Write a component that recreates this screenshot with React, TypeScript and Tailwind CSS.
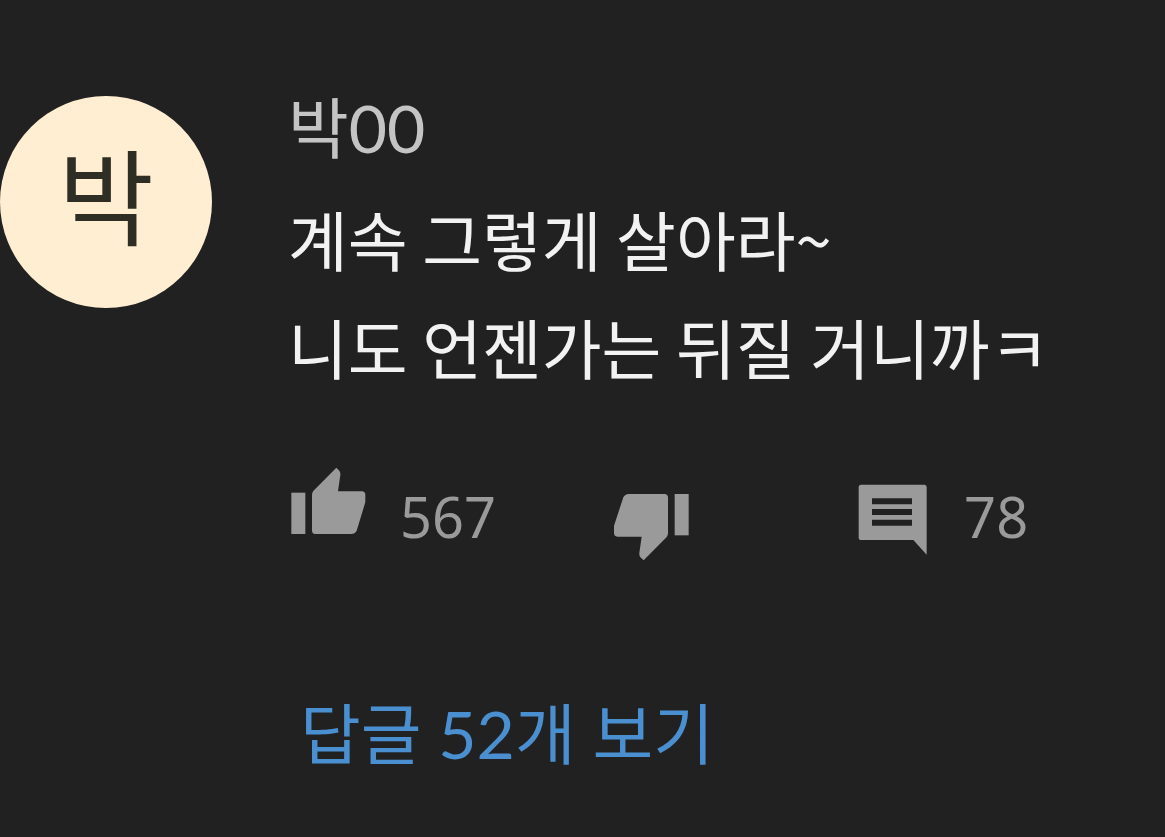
import React from 'react';

const ThumbUpIcon: React.FC<{ className?: string }> = ({ className }) => (
  <svg viewBox="0 0 24 24" fill="currentColor" className={className} aria-hidden="true">
    <path d="M1 8.6h4.2V21H1z" />
    <path d="M14.5 1.1 7.8 7.9c-.4.4-.6.9-.6 1.500V20c0 .6.4 1 1 1h10.800c.7 0 1.300-.4 1.600-1l2.500-8.200c.1-.2.1-.4.1-.7V9.200c0-.6-.4-1-1-1h-7.200l.7-4.900v-.4c0-.3-.1-.6-.3-.9z" />
  </svg>
);

const ThumbDownIcon: React.FC<{ className?: string }> = ({ className }) => (
  <svg viewBox="0 0 24 24" fill="currentColor" className={className} aria-hidden="true">
    <path d="M18.8 3H23v12.400h-4.200z" />
    <path d="M9.500 22.900l6.700-6.800c.4-.4.6-.9.6-1.500V4c0-.6-.4-1-1-1H5c-.7 0-1.300.4-1.600 1L.7 12.200c-.1.2-.1.4-.1.7v1.900c0 .6.4 1 1 1h7.300l-.7 4.900v.4c0 .3.1.6.3.9z" />
  </svg>
);

const CommentIcon: React.FC<{ className?: string }> = ({ className }) => (
  <svg viewBox="0 0 24 24" fill="currentColor" className={className} aria-hidden="true">
    <path
      fillRule="evenodd"
      d="M2.7 2h19c.4 0 .7.3.7.7V23l-4-4.400H2.700c-.4 0-.7-.3-.7-.7V2.700c0-.4.3-.7.7-.7zM6 6.100v1.800h12V6.100zm0 3.200v1.800h12V9.300zm0 3.200v1.800h12v-1.800z"
    />
  </svg>
);

const Comment: React.FC = () => {
  return (
    <article className="flex items-start gap-[76px] pt-[88px]">
      {/* Avatar */}
      <div className="mt-2 flex size-[212px] shrink-0 justify-center rounded-full bg-[#ffeed2] text-[104px] leading-[204px] text-[#2e2e24]">
        박
      </div>

      <div className="min-w-0 flex-1">
        <h2 className="text-[66px] leading-[80px] text-[#c4c4c4]">박00</h2>
        <p className="mt-4 font-['Noto_Sans_CJK_KR',sans-serif] text-[65px] leading-[108px] text-[#f2f2f2]">
          계속 그렇게 살아라~
          <br />
          니도 언젠가는 뒤질 거니까ㅋ
        </p>

        {/* Actions */}
        <div className="mt-16 flex items-center font-['Noto_Sans',sans-serif] text-[56px] leading-[80px] text-[#9a9a9a]">
          <button type="button" className="flex items-center gap-8">
            <ThumbUpIcon className="mb-6 size-20" />
            567
          </button>
          <button type="button" className="ml-[116px] pt-4" aria-label="Dislike">
            <ThumbDownIcon className="size-20" />
          </button>
          <button type="button" className="ml-40 flex items-center gap-8">
            <CommentIcon className="mt-1 size-20" />
            78
          </button>
        </div>

        <a href="#replies" className="mt-28 ml-3 block text-[66px] leading-[108px] text-[#4a8fcf]">
          답글 52개 보기
        </a>
      </div>
    </article>
  );
};

const App: React.FC = () => {
  return (
    <main className="min-h-screen bg-[#212121] font-['Lato','Noto_Sans_CJK_KR',sans-serif]">
      <Comment />
    </main>
  );
};

export default App;
